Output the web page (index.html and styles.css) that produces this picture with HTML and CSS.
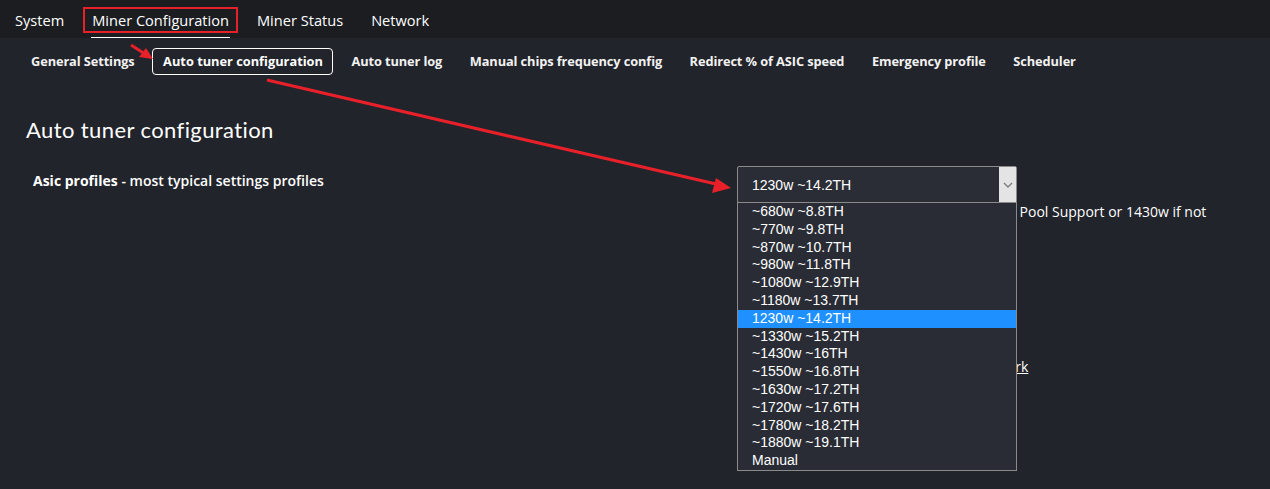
FILE: index.html
```html
<!DOCTYPE html>
<html>
<head>
<meta charset="utf-8">
<link rel="stylesheet" href="styles.css">
</head>
<body>
<header class="topbar">
  <nav class="topnav">
    <a class="topnav-item">System</a>
    <a class="topnav-item active">Miner Configuration</a>
    <a class="topnav-item">Miner Status</a>
    <a class="topnav-item">Network</a>
  </nav>
</header>
<nav class="subnav">
  <a class="subnav-item">General Settings</a>
  <a class="subnav-item active">Auto tuner configuration</a>
  <a class="subnav-item">Auto tuner log</a>
  <a class="subnav-item">Manual chips frequency config</a>
  <a class="subnav-item">Redirect % of ASIC speed</a>
  <a class="subnav-item">Emergency profile</a>
  <a class="subnav-item">Scheduler</a>
</nav>
<main class="content">
  <h1 class="title">Auto tuner configuration</h1>
  <div class="form-row">
    <div class="label"><b>Asic profiles</b> - most typical settings profiles</div>
    <div class="field">
      <div class="select">
        <span class="select-value">1230w ~14.2TH</span>
        <span class="select-arrow">
          <svg width="10" height="6" viewBox="0 0 10 6"><path d="M1 1 L5 5 L9 1" fill="none" stroke="#7a7a7a" stroke-width="1.3"/></svg>
        </span>
      </div>
      <div class="desc">
        <div class="desc-line">Recommended profile is 1230w for dev fee Pool Support or 1430w if not</div>
        <div class="desc-line">supported by the pool.</div>
        <div class="desc-line">Profiles are tested on default</div>
        <div class="desc-line">cooling with stock fans.</div>
        <div class="desc-line link-line"><a class="link">Read more in documentation of our network</a></div>
      </div>
      <ul class="dropdown">
        <li class="opt">~680w ~8.8TH</li>
        <li class="opt">~770w ~9.8TH</li>
        <li class="opt">~870w ~10.7TH</li>
        <li class="opt">~980w ~11.8TH</li>
        <li class="opt">~1080w ~12.9TH</li>
        <li class="opt">~1180w ~13.7TH</li>
        <li class="opt selected">1230w ~14.2TH</li>
        <li class="opt">~1330w ~15.2TH</li>
        <li class="opt">~1430w ~16TH</li>
        <li class="opt">~1550w ~16.8TH</li>
        <li class="opt">~1630w ~17.2TH</li>
        <li class="opt">~1720w ~17.6TH</li>
        <li class="opt">~1780w ~18.2TH</li>
        <li class="opt">~1880w ~19.1TH</li>
        <li class="opt">Manual</li>
      </ul>
    </div>
  </div>
</main>
<svg class="annot" width="1270" height="489" viewBox="0 0 1270 489">
  <g fill="#e8202a" stroke="#e8202a">
    <line x1="131" y1="45" x2="145" y2="54" stroke-width="3"/>
    <polygon points="153,59 139,57 146,48" stroke="none"/>
    <line x1="267" y1="80" x2="716" y2="184" stroke-width="3.2"/>
    <polygon points="731,188 712,193 716,178" stroke="none"/>
  </g>
</svg>
</body>
</html>
```
FILE: styles.css
```css
html, body {
  margin: 0;
  padding: 0;
}
body {
  background: #22242b;
  color: #fff;
  font-family: "Open Sans", "Noto Sans", sans-serif;
  width: 1270px;
  height: 489px;
  overflow: hidden;
  position: relative;
}
.topbar {
  background: #1b1d21;
  height: 38px;
}
.topnav {
  display: flex;
  gap: 12px;
  padding-left: 7px;
  height: 38px;
  align-items: stretch;
}
.topnav-item {
  font-size: 14.6px;
  padding: 2px 8px 0 8px;
  display: flex;
  align-items: center;
  color: #fff;
  position: relative;
}
.topnav-item.active::before {
  content: "";
  position: absolute;
  left: -1px;
  right: -1px;
  top: 7px;
  height: 22px;
  border: 2px solid #e8202a;
}
.topnav-item.active::after {
  content: "";
  position: absolute;
  left: 7px;
  right: 7px;
  bottom: 0;
  height: 1px;
  background: #fff;
}
.subnav {
  display: flex;
  gap: 8.5px;
  padding: 10px 0 0 21px;
  align-items: center;
}
.subnav-item {
  font-size: 12.8px;
  font-weight: 700;
  color: #f2f2f2;
  padding: 3px 8px 4px 9px;
  border: 1px solid transparent;
  border-radius: 4px;
  letter-spacing: -0.1px;
}
.subnav-item.active {
  border-color: #fff;
  color: #fff;
  padding: 3px 9px 4px 10px;
  letter-spacing: 0;
}
.content {
  padding: 0 0 0 26px;
}
.title {
  font-family: "Lato", "Open Sans", sans-serif;
  font-weight: 400;
  font-size: 22px;
  margin: 41px 0 0 0;
  line-height: 28px;
  letter-spacing: 0.4px;
}
.form-row {
  display: flex;
  margin-top: 22px;
}
.label {
  width: 704px;
  padding-left: 7px;
  font-size: 14px;
  font-weight: 600;
  padding-top: 5px;
}
.label b {
  font-weight: 700;
}
.field {
  position: relative;
  width: 280px;
}
.select {
  box-sizing: border-box;
  width: 280px;
  height: 37px;
  border: 1px solid #8a8a8a;
  border-radius: 2px;
  background: #2a2d35;
  display: flex;
  align-items: center;
  justify-content: space-between;
  font-family: "Liberation Sans", Arial, sans-serif;
  font-size: 14px;
}
.select-value {
  padding-left: 14px;
  padding-top: 1px;
}
.select-arrow {
  width: 17px;
  height: 35px;
  background: #e4e4e4;
  display: flex;
  align-items: center;
  justify-content: center;
}
.desc {
  font-size: 14px;
  line-height: 18px;
  padding-top: 0;
  white-space: nowrap;
}
.link-line {
  margin-top: 83px;
}
.link {
  color: #fff;
  text-decoration: underline;
}
.dropdown {
  position: absolute;
  left: 0;
  top: 36px;
  width: 280px;
  box-sizing: border-box;
  margin: 0;
  padding: 0;
  list-style: none;
  background: #292c34;
  border: 1px solid #8a8a8a;
  font-family: "Liberation Sans", Arial, sans-serif;
  font-size: 14px;
}
.opt {
  height: 17.8px;
  line-height: 17.8px;
  padding-left: 14px;
  color: #fff;
}
.opt.selected {
  background: #1e90ff;
}
.annot {
  position: absolute;
  left: 0;
  top: 0;
  pointer-events: none;
}
```
